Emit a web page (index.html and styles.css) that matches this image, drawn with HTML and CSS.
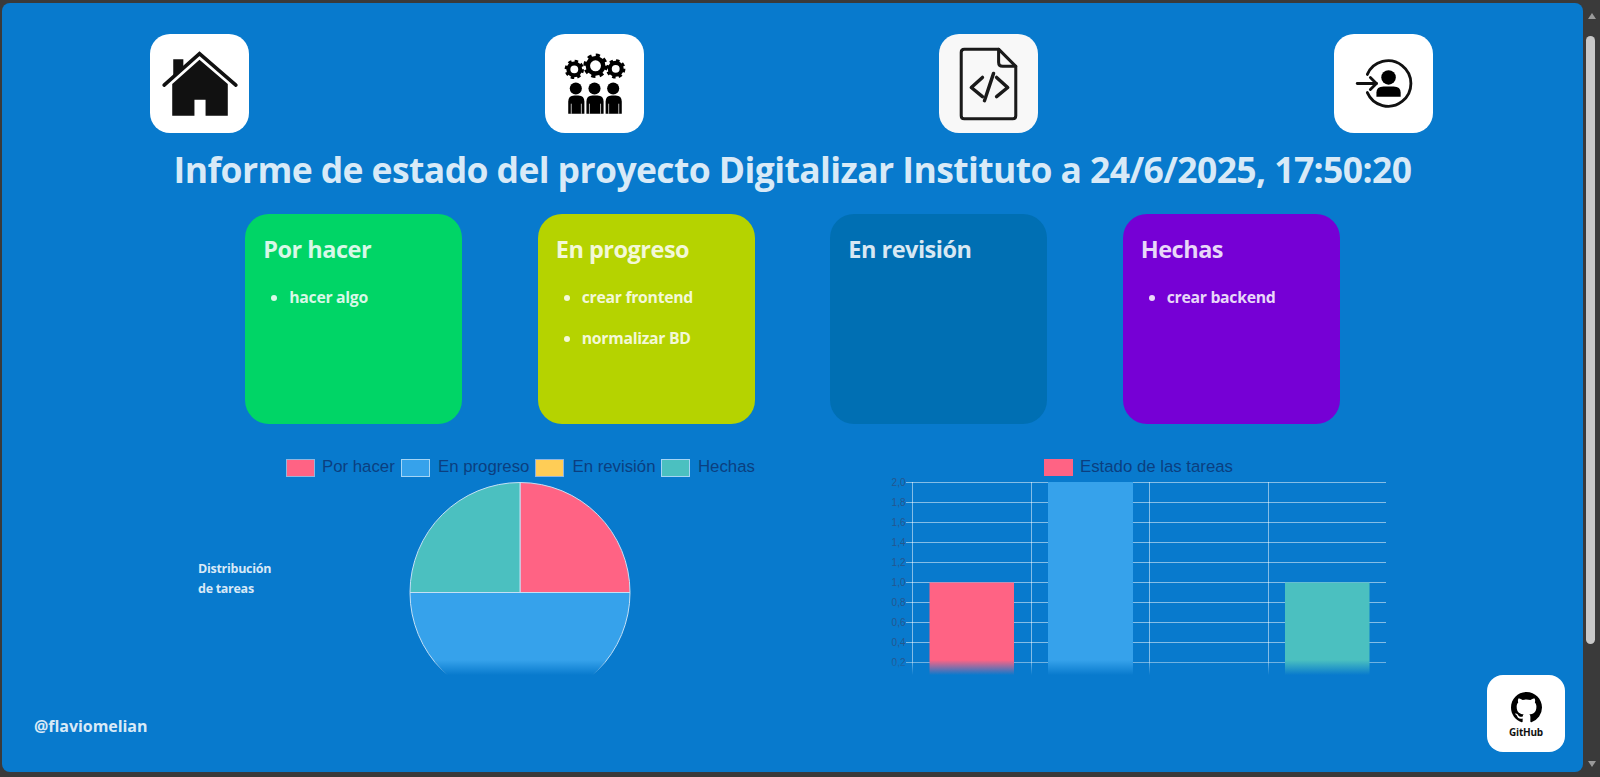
FILE: index.html
```html
<!DOCTYPE html>
<html lang="es">
<head>
  <meta charset="UTF-8">
  <title>Informe de estado</title>
  <link rel="stylesheet" href="styles.css">
</head>
<body>

  <div class="window">
    <div class="page">

      <nav class="top-nav">
        <a class="icon-card" href="#">
          <svg viewBox="0 0 98 98">
            <path d="M49 25.5 L77 49.5 V81 H55 V65 H44 V81 H22 V49.5 Z" fill="#111"/>
            <path d="M23 25 H33 V33 L23 42 Z" fill="#111"/>
            <path d="M14 50.5 L49 19.5 L85 50.5" fill="none" stroke="#111" stroke-width="3.6" stroke-linecap="round"/>
          </svg>
        </a>
        <a class="icon-card" href="#">
          <svg viewBox="0 0 98 98">
            <g fill="none" stroke="#000">
              <circle cx="29" cy="35" r="5.9" stroke-width="4"/>
              <circle cx="29" cy="35" r="8" stroke-width="3.2" stroke-dasharray="3.3 3"/>
              <circle cx="50" cy="31.5" r="7.6" stroke-width="4.4"/>
              <circle cx="50" cy="31.5" r="10.2" stroke-width="3.8" stroke-dasharray="4 4"/>
              <circle cx="70" cy="34.5" r="5.9" stroke-width="4"/>
              <circle cx="70" cy="34.5" r="8" stroke-width="3.2" stroke-dasharray="3.3 3"/>
            </g>
            <g fill="#000">
              <circle cx="30.5" cy="54" r="6"/>
              <circle cx="49" cy="54" r="6"/>
              <circle cx="67.5" cy="54" r="6"/>
              <path d="M23 79 V67 Q23 61 29 61 H33 Q39 61 39 67 V79 Z"/>
              <path d="M41 79 V67 Q41 61 47 61 H52 Q58 61 58 67 V79 Z"/>
              <path d="M60 79 V67 Q60 61 66 61 H70 Q76 61 76 67 V79 Z"/>
            </g>
            <path d="M26 69 V79 M36 69 V79 M44 69 V79 M55 69 V79 M63 69 V79 M73 69 V79" fill="none" stroke="#fff" stroke-width="0.7"/>
          </svg>
        </a>
        <a class="icon-card icon-card-grey" href="#">
          <svg viewBox="0 0 98 98">
            <g fill="none" stroke="#1a1a1a" stroke-width="3" stroke-linejoin="round" stroke-linecap="round">
              <path d="M25 15 H59 L76 32 V81 Q76 84 73 84 H25 Q22 84 22 81 V18 Q22 15 25 15 Z"/>
              <path d="M59 15 V28 Q59 32 63 32 H76"/>
              <path d="M43 43 L32 53 L43 62" stroke-width="3.4"/>
              <path d="M57 43 L68 53 L57 62" stroke-width="3.4"/>
              <path d="M54 39 L45 66" stroke-width="3.4"/>
            </g>
          </svg>
        </a>
        <a class="icon-card" href="#">
          <svg viewBox="0 0 98 98">
            <g fill="none" stroke="#111" stroke-width="2.8" stroke-linecap="round" stroke-linejoin="round">
              <path d="M33 40 A22.5 22.5 0 1 1 33 58"/>
              <path d="M23 49 H42"/>
              <path d="M36 43 L42 49 L36 55"/>
            </g>
            <circle cx="54" cy="43" r="7.2" fill="#000"/>
            <path d="M42 62 V58 Q42 52 49 52 H59 Q66 52 66 58 V62 Z" fill="#000"/>
          </svg>
        </a>
      </nav>

      <h1 class="report-title">Informe de estado del proyecto Digitalizar Instituto a 24/6/2025, 17:50:20</h1>

      <section class="board">
        <div class="column column-todo">
          <h2>Por hacer</h2>
          <ul>
            <li>hacer algo</li>
          </ul>
        </div>
        <div class="column column-progress">
          <h2>En progreso</h2>
          <ul>
            <li>crear frontend</li>
            <li>normalizar BD</li>
          </ul>
        </div>
        <div class="column column-review">
          <h2>En revisión</h2>
          <ul></ul>
        </div>
        <div class="column column-done">
          <h2>Hechas</h2>
          <ul>
            <li>crear backend</li>
          </ul>
        </div>
      </section>

      <section class="charts">
        <p class="chart-caption">Distribución<br>de tareas</p>

        <!-- viewBox uses page coordinates, easier to line up both charts -->
        <svg class="pie-chart" viewBox="286 450 480 225">
          <g class="legend-text">
            <rect x="286.5" y="459.5" width="28" height="17" fill="#ff6384" stroke="#8fb6e0"/>
            <text x="322" y="472">Por hacer</text>
            <rect x="401.5" y="459.5" width="28" height="17" fill="#36a2eb" stroke="#a5d5f5"/>
            <text x="438" y="472">En progreso</text>
            <rect x="535.5" y="459.5" width="28" height="17" fill="#ffcd56" stroke="#8fb6e0"/>
            <text x="572.5" y="472">En revisión</text>
            <rect x="661.5" y="459.5" width="28" height="17" fill="#4bc0c0" stroke="#a5d5f5"/>
            <text x="698" y="472">Hechas</text>
          </g>
          <g stroke="#c5e0f5" stroke-width="1">
            <path d="M520 592.5 V482.5 A110 110 0 0 1 630 592.5 Z" fill="#ff6384"/>
            <path d="M520 592.5 H630 A110 110 0 0 1 410 592.5 Z" fill="#36a2eb"/>
            <path d="M520 592.5 H410 A110 110 0 0 1 520 482.5 Z" fill="#4bc0c0"/>
          </g>
        </svg>

        <svg class="bar-chart" viewBox="860 450 540 225">
          <g class="legend-text">
            <rect x="1044" y="459" width="29" height="17" fill="#ff6384"/>
            <text x="1080" y="472">Estado de las tareas</text>
          </g>
          <g class="grid-lines">
            <path d="M906 482.5 H1386 M906 502.5 H1386 M906 522.5 H1386 M906 542.5 H1386 M906 562.5 H1386 M906 582.5 H1386 M906 602.5 H1386 M906 622.5 H1386 M906 642.5 H1386 M906 662.5 H1386"/>
            <path d="M912.5 482 V675 M1031.5 482 V675 M1149.5 482 V675 M1268.5 482 V675"/>
          </g>
          <rect x="929.5" y="582.5" width="84.5" height="93" fill="#ff6384"/>
          <rect x="1048" y="482" width="85" height="193" fill="#36a2eb"/>
          <rect x="1285" y="582.5" width="84.5" height="93" fill="#4bc0c0"/>
          <g class="tick-text">
            <text x="905.5" y="485.5">2,0</text>
            <text x="905.5" y="505.5">1,8</text>
            <text x="905.5" y="525.5">1,6</text>
            <text x="905.5" y="545.5">1,4</text>
            <text x="905.5" y="565.5">1,2</text>
            <text x="905.5" y="585.5">1,0</text>
            <text x="905.5" y="605.5">0,8</text>
            <text x="905.5" y="625.5">0,6</text>
            <text x="905.5" y="645.5">0,4</text>
            <text x="905.5" y="665.5">0,2</text>
          </g>
        </svg>
      </section>

      <footer class="page-footer">
        <span class="author">@flaviomelian</span>
        <a class="github-card" href="#">
          <svg viewBox="0 0 16 16">
            <path d="M8 0C3.58 0 0 3.58 0 8c0 3.54 2.29 6.53 5.47 7.59.4.07.55-.17.55-.38 0-.19-.01-.82-.01-1.49-2.01.37-2.53-.49-2.69-.94-.09-.23-.48-.94-.82-1.13-.28-.15-.68-.52-.01-.53.63-.01 1.08.58 1.23.82.72 1.21 1.87.87 2.33.66.07-.52.28-.87.51-1.07-1.78-.2-3.64-.89-3.64-3.95 0-.87.31-1.59.82-2.15-.08-.2-.36-1.02.08-2.12 0 0 .67-.21 2.2.82.64-.18 1.32-.27 2-.27s1.36.09 2 .27c1.53-1.04 2.2-.82 2.2-.82.44 1.1.16 1.92.08 2.12.51.56.82 1.27.82 2.15 0 3.07-1.87 3.75-3.65 3.95.29.25.54.73.54 1.48 0 1.07-.01 1.93-.01 2.2 0 .21.15.46.55.38A8.01 8.01 0 0 0 16 8c0-4.42-3.58-8-8-8z"/>
          </svg>
          <span>GitHub</span>
        </a>
      </footer>

    </div>

    <div class="scroll-track">
      <span class="arrow-up"></span>
      <span class="scroll-thumb"></span>
      <span class="arrow-down"></span>
    </div>
  </div>

</body>
</html>
```

FILE: styles.css
```css
* {
  box-sizing: border-box;
}

html, body {
  height: 100%;
  margin: 0;
  overflow: hidden;
}

body {
  font-family: "Open Sans", "Noto Sans", sans-serif;
  background-color: #3a3a3a;
  color: rgba(255, 255, 255, 0.85);
}

.window {
  display: flex;
  height: 777px;
  padding: 3px 0 5px 2px;
}

.page {
  flex: 1;
  display: flex;
  flex-direction: column;
  background-color: #087acd;
  border-radius: 8px;
}

/* top icons */
.top-nav {
  display: flex;
  justify-content: space-around;
  padding: 31px 2px 0 0;
}

.icon-card {
  display: block;
  width: 99px;
  height: 99px;
  background-color: #fff;
  border-radius: 20px;
}

.icon-card-grey {
  background-color: #f8f8f8;
}

.icon-card svg {
  display: block;
  width: 100%;
  height: 100%;
}

.report-title {
  margin: 12px 0 21px;
  font-size: 35.5px;
  font-weight: 700;
  line-height: 48px;
  letter-spacing: -0.6px;
  text-align: center;
}

/* task columns */
.board {
  display: flex;
  justify-content: center;
  gap: 75.5px;
}

.column {
  width: 217px;
  height: 210px;
  padding: 19px 18px;
  border-radius: 24px;
}

.column h2 {
  margin: 0;
  font-size: 23.5px;
  font-weight: 700;
  line-height: 32px;
  letter-spacing: -0.5px;
}

.column ul {
  margin: 21px 0 0;
  padding-left: 26px;
  font-size: 15.8px;
  font-weight: 700;
  letter-spacing: -0.3px;
}

.column li {
  height: 41px;
  line-height: 22px;
}

.column-todo { background-color: #00d566; }
.column-progress { background-color: #b5d300; }
.column-review { background-color: #006fb3; }
.column-done { background-color: #7600d5; }

/* charts */
.charts {
  position: relative;
  display: flex;
  height: 225px;
  margin-top: 26px;
  padding-left: 196px;
  overflow: hidden;
}

.charts::after {
  content: "";
  position: absolute;
  left: 0;
  right: 0;
  bottom: 0;
  height: 15px;
  background: linear-gradient(to bottom, rgba(8, 122, 205, 0), #087acd);
}

.chart-caption {
  flex: none;
  width: 88px;
  margin: 109px 0 0;
  font-size: 12.5px;
  font-weight: 700;
  line-height: 20px;
  letter-spacing: -0.28px;
}

.pie-chart {
  flex: none;
  width: 480px;
  height: 225px;
}

.bar-chart {
  flex: none;
  width: 540px;
  height: 225px;
  margin-left: 94px;
}

.legend-text {
  font-family: "Liberation Sans", Arial, sans-serif;
  font-size: 16.8px;
  fill: #0b3f80;
}

.grid-lines {
  fill: none;
  stroke: rgba(255, 255, 255, 0.5);
  stroke-width: 1;
}

.tick-text {
  font-family: "Liberation Sans", Arial, sans-serif;
  font-size: 10px;
  fill: #24578f;
  text-anchor: end;
}

/* footer */
.page-footer {
  display: flex;
  justify-content: space-between;
  align-items: flex-end;
  padding: 0 18px 20px 32px;
}

.author {
  margin-bottom: 15px;
  font-size: 16px;
  font-weight: 700;
  line-height: 22px;
  letter-spacing: -0.05px;
}

.github-card {
  display: flex;
  flex-direction: column;
  align-items: center;
  width: 78px;
  height: 77px;
  padding-top: 17px;
  background-color: #fff;
  border-radius: 16px;
  color: #111;
  text-decoration: none;
}

.github-card svg {
  width: 31px;
  height: 31px;
}

.github-card span {
  margin-top: 2px;
  font-size: 10px;
  font-weight: 700;
  line-height: 14px;
  letter-spacing: -0.2px;
}

/* fake scrollbar from the browser */
.scroll-track {
  position: relative;
  width: 17px;
  display: flex;
  flex-direction: column;
  align-items: center;
}

.arrow-up {
  margin-top: 10px;
  border-left: 4px solid transparent;
  border-right: 4px solid transparent;
  border-bottom: 6px solid #9a9a9a;
}

.scroll-thumb {
  width: 9px;
  height: 608px;
  margin-top: 17px;
  margin-left: -2px;
  background-color: #c8c8c8;
  border-radius: 5px;
}

.arrow-down {
  margin-top: auto;
  margin-bottom: 5px;
  border-left: 4px solid transparent;
  border-right: 4px solid transparent;
  border-top: 6px solid #9a9a9a;
}
```
